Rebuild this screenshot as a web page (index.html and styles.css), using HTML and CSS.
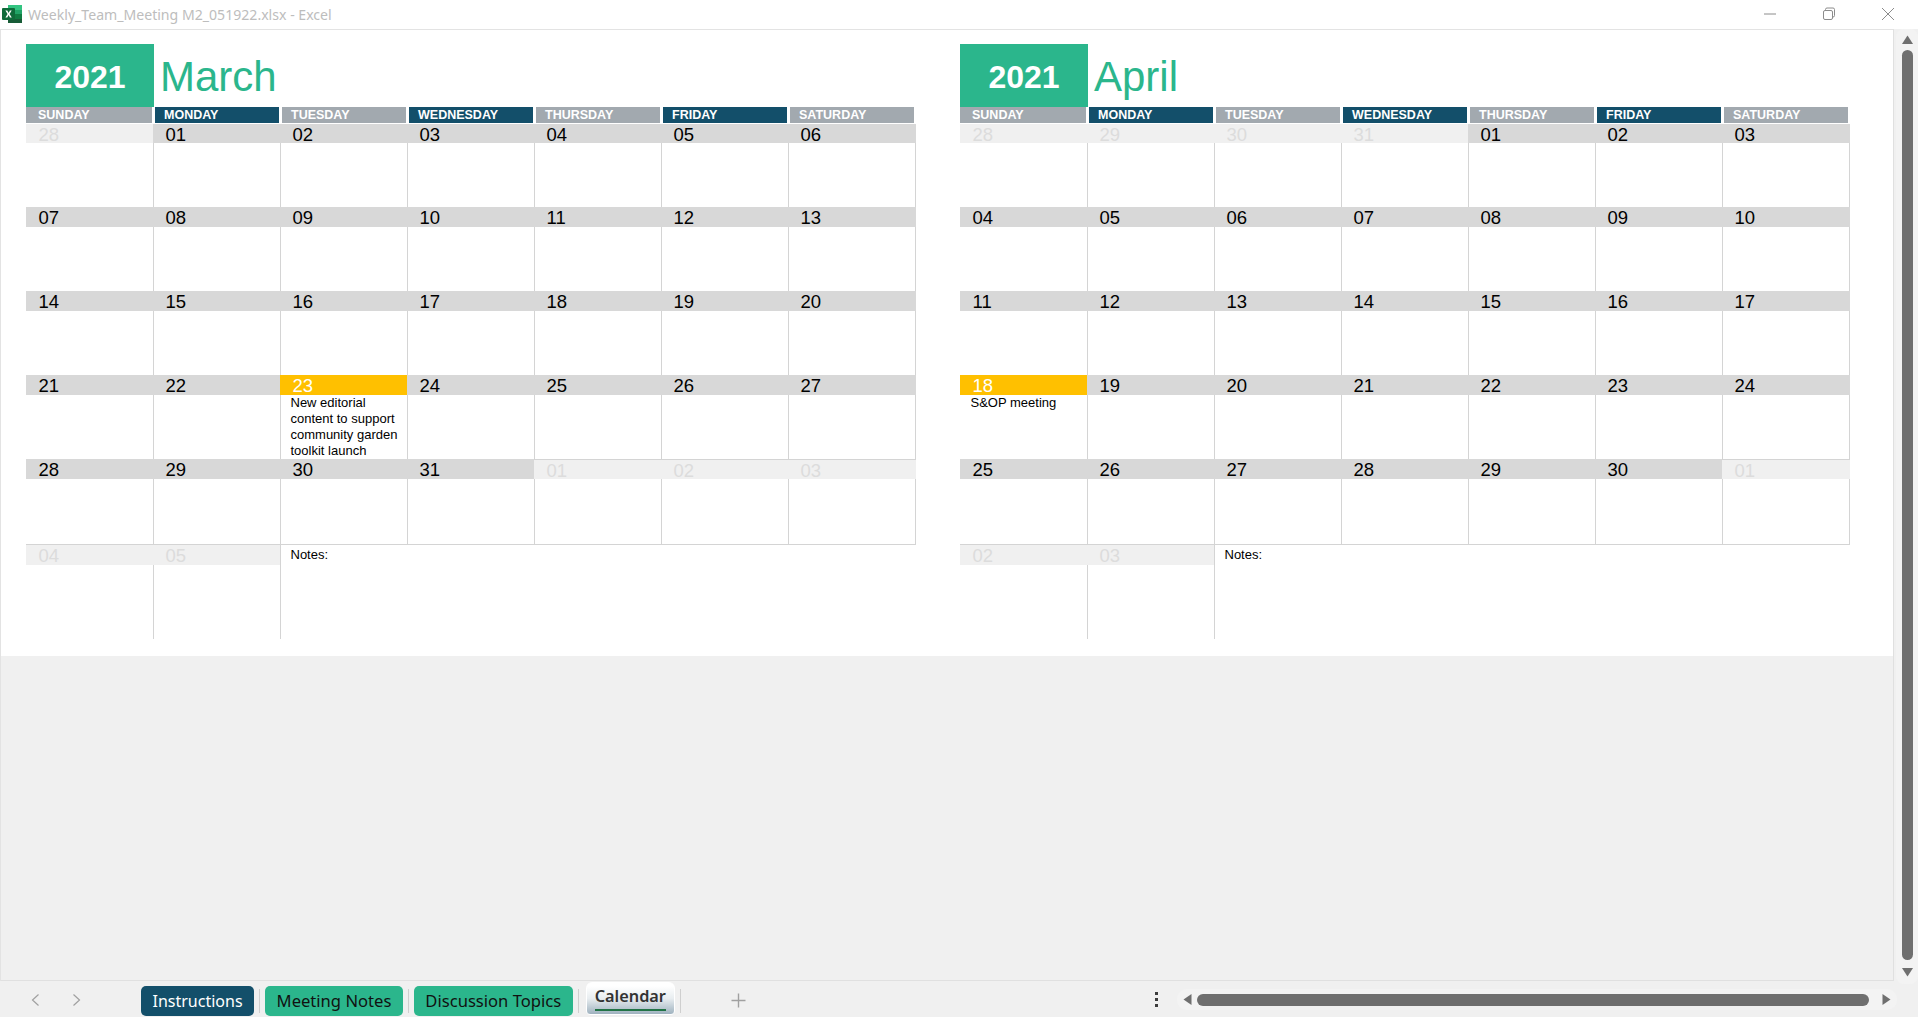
FILE: index.html
```html
<!DOCTYPE html>
<html lang="en">
<head>
<meta charset="utf-8">
<title>Weekly_Team_Meeting M2_051922.xlsx - Excel</title>
<link rel="stylesheet" href="styles.css">
</head>
<body>
<div class="app">
  <header class="titlebar">
    <svg class="xl-icon" width="20" height="18" viewBox="0 0 20 18">
      <rect x="6" y="0" width="14" height="18" rx="1" fill="#21a366"/>
      <rect x="6" y="0" width="14" height="5" fill="#33c481"/>
      <rect x="6" y="9" width="14" height="5" fill="#107c41"/>
      <rect x="6" y="14" width="14" height="4" fill="#185c37"/>
      <rect x="13" y="5" width="7" height="4" fill="#21a366"/>
      <rect x="0" y="3" width="13" height="12" rx="1" fill="#0f6b3a"/>
      <path d="M3.4 5.6h1.9l1.3 2.3 1.3-2.3h1.8L7.6 9l2.2 3.4H7.9L6.6 10.100l-1.300 2.300H3.400L5.600 9z" fill="#fff"/>
    </svg>
    <span class="doc-title">Weekly_Team_Meeting M2_051922.xlsx - Excel</span>
    <div class="win-btns">
      <svg width="14" height="14" viewBox="0 0 14 14"><path d="M1 7h12" stroke="#8c8c8c" fill="none"/></svg>
      <svg width="14" height="14" viewBox="0 0 14 14"><path d="M3.500 3.500V2.500a1.500 1.500 0 0 1 1.500-1.500h6a1.500 1.500 0 0 1 1.500 1.500v6a1.500 1.500 0 0 1-1.500 1.500h-0.500" stroke="#8c8c8c" fill="none"/><rect x="1.500" y="3.500" width="9" height="9" rx="1.500" stroke="#8c8c8c" fill="none"/></svg>
      <svg width="14" height="14" viewBox="0 0 14 14"><path d="M1 1l12 12M13 1L1 13" stroke="#8c8c8c" fill="none"/></svg>
    </div>
  </header>

  <div class="main">
    <div class="workspace">
      <section class="sheet">

        <div class="month">
          <div class="month-head"><div class="year">2021</div><div class="month-name">March</div></div>
          <div class="dow">
            <div class="day">SUNDAY</div><div class="day navy">MONDAY</div><div class="day">TUESDAY</div><div class="day navy">WEDNESDAY</div><div class="day">THURSDAY</div><div class="day navy">FRIDAY</div><div class="day">SATURDAY</div>
          </div>
          <div class="week">
            <div class="cell muted"><div class="num">28</div><div class="body"></div></div>
            <div class="cell"><div class="num">01</div><div class="body"></div></div>
            <div class="cell"><div class="num">02</div><div class="body"></div></div>
            <div class="cell"><div class="num">03</div><div class="body"></div></div>
            <div class="cell"><div class="num">04</div><div class="body"></div></div>
            <div class="cell"><div class="num">05</div><div class="body"></div></div>
            <div class="cell"><div class="num">06</div><div class="body"></div></div>
          </div>
          <div class="week">
            <div class="cell"><div class="num">07</div><div class="body"></div></div>
            <div class="cell"><div class="num">08</div><div class="body"></div></div>
            <div class="cell"><div class="num">09</div><div class="body"></div></div>
            <div class="cell"><div class="num">10</div><div class="body"></div></div>
            <div class="cell"><div class="num">11</div><div class="body"></div></div>
            <div class="cell"><div class="num">12</div><div class="body"></div></div>
            <div class="cell"><div class="num">13</div><div class="body"></div></div>
          </div>
          <div class="week">
            <div class="cell"><div class="num">14</div><div class="body"></div></div>
            <div class="cell"><div class="num">15</div><div class="body"></div></div>
            <div class="cell"><div class="num">16</div><div class="body"></div></div>
            <div class="cell"><div class="num">17</div><div class="body"></div></div>
            <div class="cell"><div class="num">18</div><div class="body"></div></div>
            <div class="cell"><div class="num">19</div><div class="body"></div></div>
            <div class="cell"><div class="num">20</div><div class="body"></div></div>
          </div>
          <div class="week">
            <div class="cell"><div class="num">21</div><div class="body"></div></div>
            <div class="cell"><div class="num">22</div><div class="body"></div></div>
            <div class="cell today"><div class="num">23</div><div class="body">New editorial<br>content to support<br>community garden<br>toolkit launch</div></div>
            <div class="cell"><div class="num">24</div><div class="body"></div></div>
            <div class="cell"><div class="num">25</div><div class="body"></div></div>
            <div class="cell"><div class="num">26</div><div class="body"></div></div>
            <div class="cell"><div class="num">27</div><div class="body"></div></div>
          </div>
          <div class="week week-last">
            <div class="cell"><div class="num">28</div><div class="body"></div></div>
            <div class="cell"><div class="num">29</div><div class="body"></div></div>
            <div class="cell"><div class="num">30</div><div class="body"></div></div>
            <div class="cell"><div class="num">31</div><div class="body"></div></div>
            <div class="cell muted"><div class="num">01</div><div class="body"></div></div>
            <div class="cell muted"><div class="num">02</div><div class="body"></div></div>
            <div class="cell muted"><div class="num">03</div><div class="body"></div></div>
          </div>
          <div class="week week-notes">
            <div class="cell muted"><div class="num">04</div><div class="body"></div></div>
            <div class="cell muted"><div class="num">05</div><div class="body"></div></div>
            <div class="notes">Notes:</div>
          </div>
        </div>

        <div class="month">
          <div class="month-head"><div class="year">2021</div><div class="month-name">April</div></div>
          <div class="dow">
            <div class="day">SUNDAY</div><div class="day navy">MONDAY</div><div class="day">TUESDAY</div><div class="day navy">WEDNESDAY</div><div class="day">THURSDAY</div><div class="day navy">FRIDAY</div><div class="day">SATURDAY</div>
          </div>
          <div class="week">
            <div class="cell muted"><div class="num">28</div><div class="body"></div></div>
            <div class="cell muted"><div class="num">29</div><div class="body"></div></div>
            <div class="cell muted"><div class="num">30</div><div class="body"></div></div>
            <div class="cell muted"><div class="num">31</div><div class="body"></div></div>
            <div class="cell"><div class="num">01</div><div class="body"></div></div>
            <div class="cell"><div class="num">02</div><div class="body"></div></div>
            <div class="cell"><div class="num">03</div><div class="body"></div></div>
          </div>
          <div class="week">
            <div class="cell"><div class="num">04</div><div class="body"></div></div>
            <div class="cell"><div class="num">05</div><div class="body"></div></div>
            <div class="cell"><div class="num">06</div><div class="body"></div></div>
            <div class="cell"><div class="num">07</div><div class="body"></div></div>
            <div class="cell"><div class="num">08</div><div class="body"></div></div>
            <div class="cell"><div class="num">09</div><div class="body"></div></div>
            <div class="cell"><div class="num">10</div><div class="body"></div></div>
          </div>
          <div class="week">
            <div class="cell"><div class="num">11</div><div class="body"></div></div>
            <div class="cell"><div class="num">12</div><div class="body"></div></div>
            <div class="cell"><div class="num">13</div><div class="body"></div></div>
            <div class="cell"><div class="num">14</div><div class="body"></div></div>
            <div class="cell"><div class="num">15</div><div class="body"></div></div>
            <div class="cell"><div class="num">16</div><div class="body"></div></div>
            <div class="cell"><div class="num">17</div><div class="body"></div></div>
          </div>
          <div class="week">
            <div class="cell today"><div class="num">18</div><div class="body">S&amp;OP meeting</div></div>
            <div class="cell"><div class="num">19</div><div class="body"></div></div>
            <div class="cell"><div class="num">20</div><div class="body"></div></div>
            <div class="cell"><div class="num">21</div><div class="body"></div></div>
            <div class="cell"><div class="num">22</div><div class="body"></div></div>
            <div class="cell"><div class="num">23</div><div class="body"></div></div>
            <div class="cell"><div class="num">24</div><div class="body"></div></div>
          </div>
          <div class="week week-last">
            <div class="cell"><div class="num">25</div><div class="body"></div></div>
            <div class="cell"><div class="num">26</div><div class="body"></div></div>
            <div class="cell"><div class="num">27</div><div class="body"></div></div>
            <div class="cell"><div class="num">28</div><div class="body"></div></div>
            <div class="cell"><div class="num">29</div><div class="body"></div></div>
            <div class="cell"><div class="num">30</div><div class="body"></div></div>
            <div class="cell muted"><div class="num">01</div><div class="body"></div></div>
          </div>
          <div class="week week-notes">
            <div class="cell muted"><div class="num">02</div><div class="body"></div></div>
            <div class="cell muted"><div class="num">03</div><div class="body"></div></div>
            <div class="notes">Notes:</div>
          </div>
        </div>

      </section>
    </div>
    <aside class="vscroll">
      <svg class="arrow-up" width="11" height="9" viewBox="0 0 11 9"><path d="M5.500 0.500L11 9H0z" fill="#6f6f6f"/></svg>
      <div class="vthumb"></div>
      <svg class="arrow-down" width="11" height="9" viewBox="0 0 11 9"><path d="M0 0h11L5.500 8.500z" fill="#6f6f6f"/></svg>
    </aside>
  </div>

  <footer class="tabbar">
    <nav class="tab-nav">
      <svg width="9" height="12" viewBox="0 0 9 12"><path d="M7.500 0.500L1.500 6l6 5.500" stroke="#a0a0a0" stroke-width="1.200" fill="none"/></svg>
      <svg width="9" height="12" viewBox="0 0 9 12"><path d="M1.500 0.500L7.500 6l-6 5.500" stroke="#a0a0a0" stroke-width="1.200" fill="none"/></svg>
    </nav>
    <div class="tab tab-navy">Instructions</div>
    <span class="tab-sep"></span>
    <div class="tab tab-green">Meeting Notes</div>
    <span class="tab-sep"></span>
    <div class="tab tab-green">Discussion Topics</div>
    <span class="tab-sep"></span>
    <div class="tab tab-active">Calendar</div>
    <span class="tab-sep"></span>
    <svg class="tab-add" width="15" height="15" viewBox="0 0 15 15"><path d="M7.500 0.500v14M0.500 7.500h14" stroke="#a0a0a0" stroke-width="1.400" fill="none"/></svg>
    <span class="kebab"><i></i><i></i><i></i></span>
    <div class="hscroll">
      <svg width="9" height="11" viewBox="0 0 9 11"><path d="M8.500 0v11L0.500 5.500z" fill="#6f6f6f"/></svg>
      <div class="hthumb"></div>
      <svg width="9" height="11" viewBox="0 0 9 11"><path d="M0.500 0v11l8-5.500z" fill="#6f6f6f"/></svg>
    </div>
  </footer>
</div>
</body>
</html>
```
FILE: styles.css
```css
* { box-sizing: border-box; }
html, body { margin: 0; height: 100%; overflow: hidden; }
body { background: #f0f0f0; font-family: "Liberation Sans", Arial, sans-serif; color: #000; }

.app { display: flex; flex-direction: column; height: 1017px; }

/* title bar */
.titlebar {
  display: flex; align-items: center; height: 29px; flex: none;
  background: #fff; padding-left: 2px;
}
.xl-icon { flex: none; margin-top: -1px; }
.doc-title {
  margin-left: 6px; font-family: "Noto Sans", sans-serif; font-size: 14.100px;
  color: #bdbdbd; white-space: nowrap;
}
.win-btns { margin-left: auto; display: flex; align-items: center; gap: 45px; padding-right: 23px; margin-top: -2px; }

/* main region */
.main { display: flex; height: 952px; flex: none; }
.workspace {
  flex: none; width: 1894px; background: #f0f0f0;
  border-top: 1px solid #e3e3e3; border-left: 1px solid #e3e3e3;
  border-right: 1px solid #e0e0e0; border-bottom: 1px solid #e0e0e0;
}
.sheet {
  display: flex; gap: 44px; height: 626px; background: #fff;
  padding: 14px 0 0 25px;
}
.month { width: 890px; flex: none; }
.month-head { display: flex; height: 63px; }
.year {
  width: 128px; background: #2bb68c; color: #fff; font-weight: 700; font-size: 32px;
  display: flex; align-items: center; justify-content: center; padding-top: 3px;
}
.month-name {
  margin-left: 6px; color: #2bb68c; font-size: 42px; line-height: 65px;
}

.dow { display: grid; grid-template-columns: repeat(6, 127px) 128px; height: 16px; }
.day {
  height: 16px; margin: 0 1px 0 2px; padding-left: 9px; background: #a2a9af; color: #fff;
  font-size: 12.500px; font-weight: 700; line-height: 17px; white-space: nowrap; overflow: hidden;
}
.day:first-child { margin: 0 1px 0 0; padding-left: 12px; }
.day:last-child { margin-right: 2px; }
.day.navy { background: #134f6a; }

.week { display: grid; grid-template-columns: repeat(6, 127px) 128px; height: 84px; }
.week-last { height: 86px; border-bottom: 1px solid #d4d4d4; }
.week-notes { height: 94px; }
.cell { display: flex; flex-direction: column; min-width: 0; }
.num {
  height: 20px; flex: none; background: #d8d8d8; padding-left: 12.500px;
  font-size: 18.500px; line-height: 22px;
}
.dow + .week .num { border-top: 1px solid #fff; line-height: 22px; }
.body {
  flex: 1; border-left: 1px solid #d4d4d4; padding-left: 9.500px;
  font-size: 13px; line-height: 16px; white-space: nowrap;
}
.cell:first-child .body { border-left-color: transparent; }
.cell:last-child .body { border-right: 1px solid #d4d4d4; }
.muted .num { background: #f0f0f0; color: #dcdcdc; }
.week-last .muted .num { border-top: 1px solid #d4d4d4; line-height: 21px; }
.today .num { background: #ffc000; color: #fff; }
.notes {
  grid-column: span 5; border-left: 1px solid #d4d4d4; padding: 2px 0 0 9.500px;
  font-size: 13px; line-height: 16px;
}

/* vertical scrollbar */
.vscroll {
  flex: none; width: 22px; margin-left: 2px; margin-bottom: -3px; position: relative; z-index: 1;
  background: #f3f3f3; border-radius: 8px;
  display: flex; flex-direction: column; align-items: center;
  padding: 6px 0 6px;
}
.arrow-up, .arrow-down { flex: none; }
.vthumb { flex: none; width: 11px; height: 910px; margin: 6px 0 8px; background: #6f6f6f; border-radius: 6px; }

/* tab bar */
.tabbar { display: flex; align-items: center; height: 36px; flex: none; padding-top: 4px; }
.tab-nav { flex: none; width: 141px; display: flex; gap: 32px; padding-left: 31px; margin-top: -2px; }
.tab {
  flex: none; height: 30px; border-radius: 5px; font-family: "Noto Sans", sans-serif;
  font-size: 16px; line-height: 30px; padding: 0 11.500px; white-space: nowrap;
}
.tab-navy { background: #134f6a; color: #fff; }
.tab-green { background: #2bb68c; color: #111; font-size: 16.600px; }
.tab-active {
  height: 33px; margin-top: -6px; margin-left: 2px; padding: 0 8px; color: #333; font-size: 16.300px; font-weight: 600; line-height: 27px;
  background: linear-gradient(#ffffff 10%, #e8edf0 50%, #9fb2bf);
  border: 1px solid #fff; border-radius: 6px 6px 4px 4px; position: relative;
}
.tab-active::after {
  content: ""; position: absolute; left: 8px; right: 8px; bottom: 3px; height: 2px; background: #217346;
}
.tab-sep { flex: none; width: 1px; height: 24px; margin: 0 5px; background: #cfcfcf; }
.tab-add { flex: none; margin-left: 45px; margin-top: -2px; }
.kebab { display: flex; flex-direction: column; gap: 3px; margin-left: auto; margin-right: 19px; margin-top: -3px; }
.kebab i { display: block; width: 3px; height: 3px; background: #3c3c3c; }
.hscroll {
  flex: none; width: 720px; height: 21px; margin-right: 21px; margin-top: -3px;
  background: #f3f3f3; border-radius: 10px;
  display: flex; align-items: center; padding: 0 6px;
}
.hscroll svg { flex: none; }
.hthumb { flex: none; width: 672px; height: 12px; margin: 0 13px 0 5px; background: #6f6f6f; border-radius: 6px; }
```
